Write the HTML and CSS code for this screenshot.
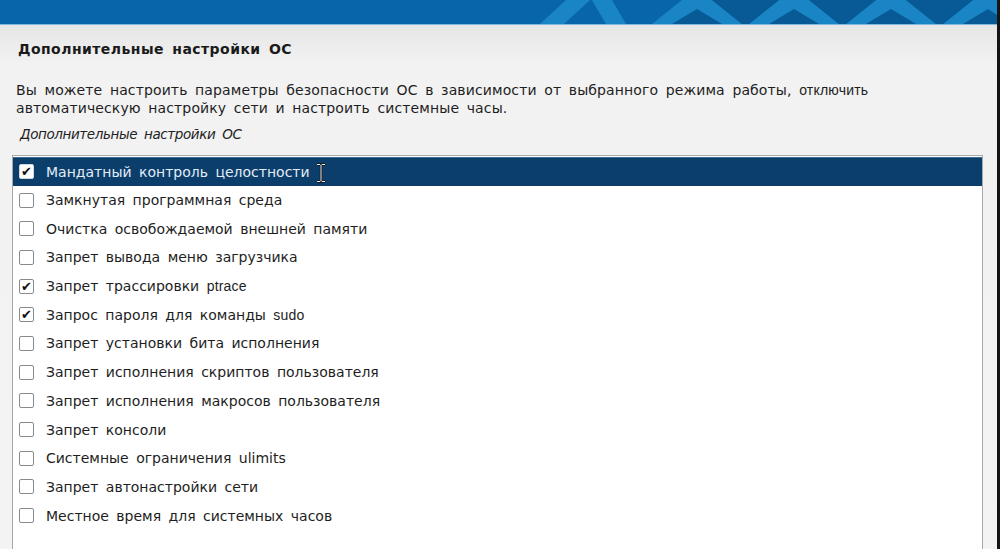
FILE: index.html
```html
<!DOCTYPE html>
<html lang="ru">
<head>
<meta charset="utf-8">
<title>Дополнительные настройки ОС</title>
<link rel="stylesheet" href="styles.css">
</head>
<body>
<div class="screen">
  <div class="main">
    <header class="topbar">
      <svg class="pattern" width="997" height="24" viewBox="0 0 997 24" aria-hidden="true">
        <g class="light">
          <polygon points="540,24 566,0 590,0 564,24"/>
          <polygon points="606,24 592,0 612,0 626,24"/>
          <polygon points="652,24 682,0 712,0 742,24"/>
          <polygon points="749,24 779,0 809,0 839,24"/>
          <polygon points="846,24 876,0 906,0 936,24"/>
          <polygon points="943,24 973,0 997,0 997,24"/>
        </g>
        <g class="dark">
          <polygon points="672,24 697,9 722,24"/>
          <polygon points="769,24 794,9 819,24"/>
          <polygon points="866,24 891,9 916,24"/>
          <polygon points="963,24 988,9 997,15 997,24"/>
          <polygon points="712,0 742,24 749,24 779,0"/>
          <polygon points="809,0 839,24 846,24 876,0"/>
          <polygon points="906,0 936,24 943,24 973,0"/>
        </g>
      </svg>
    </header>
    <section class="content">
      <h1 class="title">Дополнительные настройки ОС</h1>
      <p class="desc">Вы можете настроить параметры безопасности ОС в зависимости от выбранного режима работы, <span class="alt">отключить</span><br>автоматическую настройку сети и настроить системные часы.</p>
      <p class="sub">Дополнительные настройки ОС</p>
      <div class="listbox">
        <div class="row selected"><span class="box checked">✔</span><span class="label">Мандатный контроль целостности</span><svg class="ibeam" width="10" height="20" viewBox="0 0 10 20" aria-hidden="true"><path d="M1 1.5h3l1 1 1-1h3M5 2.5v15M1 18.5h3l1-1 1 1h3" fill="none" stroke="#111" stroke-width="2.4"/><path d="M1 1.5h3l1 1 1-1h3M5 2.5v15M1 18.5h3l1-1 1 1h3" fill="none" stroke="#f0f0f0" stroke-width="1"/></svg></div>
        <div class="row"><span class="box"></span><span class="label">Замкнутая программная среда</span></div>
        <div class="row"><span class="box"></span><span class="label">Очистка освобождаемой внешней памяти</span></div>
        <div class="row"><span class="box"></span><span class="label">Запрет вывода меню загрузчика</span></div>
        <div class="row"><span class="box checked">✔</span><span class="label">Запрет трассировки <span class="alt">ptrace</span></span></div>
        <div class="row"><span class="box checked">✔</span><span class="label">Запрос пароля для команды <span class="alt">sudo</span></span></div>
        <div class="row"><span class="box"></span><span class="label">Запрет установки бита исполнения</span></div>
        <div class="row"><span class="box"></span><span class="label">Запрет исполнения скриптов пользователя</span></div>
        <div class="row"><span class="box"></span><span class="label">Запрет исполнения макросов пользователя</span></div>
        <div class="row"><span class="box"></span><span class="label">Запрет консоли</span></div>
        <div class="row"><span class="box"></span><span class="label">Системные ограничения ulimits</span></div>
        <div class="row"><span class="box"></span><span class="label">Запрет автонастройки сети</span></div>
        <div class="row"><span class="box"></span><span class="label">Местное время для системных часов</span></div>
      </div>
    </section>
  </div>
  <div class="edge"></div>
</div>
</body>
</html>
```
FILE: styles.css
```css
html, body {
  margin: 0;
  padding: 0;
  height: 100%;
  overflow: hidden;
}
body {
  font-family: "DejaVu Sans", "Noto Sans", sans-serif;
  color: #1c1c1c;
  background: #f2f2f2;
}
.screen {
  display: flex;
  height: 549px;
}
.main {
  flex: 1;
  display: flex;
  flex-direction: column;
  min-width: 0;
}
.edge {
  width: 3px;
  background: #141414;
}
.topbar {
  height: 24px;
  background: #0866a8;
  border-bottom: 1px solid #7fb8e0;
  flex: none;
  overflow: hidden;
}
.pattern { display: block; }
.pattern .light polygon { fill: #1a85c5; }
.pattern .dark polygon { fill: #075a95; }
.content {
  flex: 1;
  background: linear-gradient(#e6e6e6 0, #f2f2f2 40px, #f3f3f3 100%);
  padding: 14px 14px 0 12px;
  display: flex;
  flex-direction: column;
  min-height: 0;
}
.title {
  margin: 0 0 0 6px;
  font-size: 14px;
  font-weight: bold;
  letter-spacing: 0.45px;
  word-spacing: 3px;
  line-height: 20px;
  color: #1a1a1a;
}
.desc {
  margin: 22px 0 0 4px;
  font-size: 14px;
  line-height: 18px;
  letter-spacing: 0.12px;
  word-spacing: 3px;
  color: #1e1e1e;
}
.alt {
  font-family: "Liberation Sans", Arial, sans-serif;
  letter-spacing: 0.2px;
}
.sub {
  margin: 8px 0 0 8px;
  font-size: 13.5px;
  font-style: italic;
  line-height: 18px;
  letter-spacing: -0.4px;
  word-spacing: 3px;
  color: #222;
}
.listbox {
  margin-top: 12px;
  flex: 1;
  background: #ffffff;
  border: 1px solid #a8a8a8;
  border-bottom: none;
  padding-top: 1px;
}
.row {
  height: 28.7px;
  display: flex;
  align-items: center;
  padding-left: 6px;
  font-size: 14px;
  letter-spacing: 0;
  word-spacing: 3px;
  color: #1e1e1e;
  position: relative;
}
.row.selected {
  background: #0c3e6c;
  color: #e2ecf7;
  border-top: 1px solid #3c6a94;
  height: 27.7px;
}
.box {
  width: 13px;
  height: 13px;
  border: 1px solid #8a8a8a;
  border-radius: 2px;
  background: #fff;
  flex: none;
  margin-right: 12px;
  display: flex;
  align-items: center;
  justify-content: center;
  font-size: 13px;
  font-weight: bold;
  line-height: 1;
  letter-spacing: 0;
  color: #111;
}
.selected .box { border-color: #cfd8e2; }
.ibeam {
  position: absolute;
  left: 303px;
  top: 5px;
}
```
